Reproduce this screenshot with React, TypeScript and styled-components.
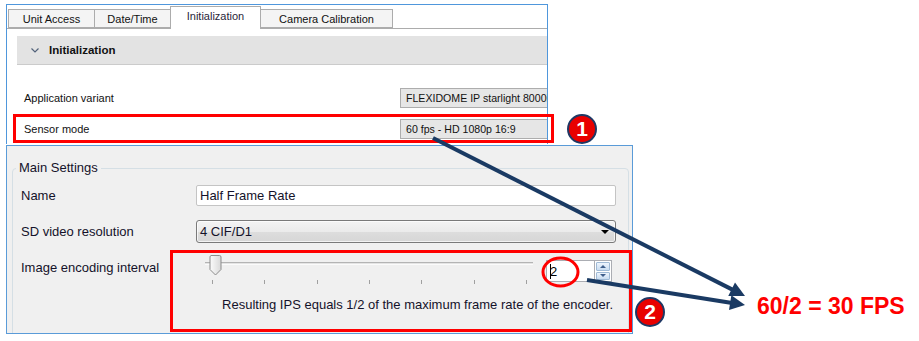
import React from 'react';
import styled, { createGlobalStyle } from 'styled-components';

const GlobalStyle = createGlobalStyle`
  html, body { margin: 0; padding: 0; background: #fff; }
  body { font-family: "Liberation Sans", Arial, sans-serif; color: #111; }
`;

const Canvas = styled.div`
  position: relative;
  width: 919px;
  height: 341px;
  overflow: hidden;
  box-sizing: border-box;
  padding: 4px 0 0 6px;
  display: flex;
  flex-direction: column;
  gap: 1px;
`;

/* ---------- top: configuration tree panel ---------- */

const ConfigPanel = styled.div`
  width: 542px;
  height: 140px;
  box-sizing: border-box;
  border: 1px solid #4f97dc;
  border-bottom: none;
  background: #fff;
  overflow: hidden;
  font-size: 11px;
`;

const TabStrip = styled.div`
  display: flex;
  align-items: flex-end;
  height: 23px;
  padding-left: 1px;
  border-bottom: 1px solid #acacac;
`;

const Tab = styled.div<{ $w: number; $active?: boolean }>`
  width: ${p => p.$w}px;
  height: ${p => (p.$active ? 23 : 19)}px;
  margin-bottom: ${p => (p.$active ? -1 : 0)}px;
  margin-left: -1px;
  box-sizing: border-box;
  border: 1px solid #acacac;
  border-bottom: ${p => (p.$active ? 'none' : '1px solid #acacac')};
  background: ${p => (p.$active ? '#fff' : '#f4f4f4')};
  display: flex;
  justify-content: center;
  padding-top: 3px;
  color: ${p => (p.$active ? '#2a1f3a' : '#111')};
  &:first-child { margin-left: 0; }
`;

const TabBody = styled.div`
  padding-left: 10px;
`;

const SectionHeader = styled.div`
  margin-top: 7px;
  height: 29px;
  box-sizing: border-box;
  background: #e3e3e3;
  border-bottom: 1px solid #cbcbcb;
  display: flex;
  align-items: center;
  gap: 10px;
  padding-left: 14px;
  font-weight: bold;
  font-size: 11.5px;
`;

const PropRow = styled.div<{ $mt?: number }>`
  margin-top: ${p => p.$mt ?? 0}px;
  height: 31px;
  display: flex;
  align-items: center;
  padding-left: 7px;
`;

const PropLabel = styled.div`
  width: 376px;
  flex-shrink: 0;
`;

const ReadOnlyBox = styled.div`
  flex-shrink: 0;
  width: 200px;
  height: 20px;
  box-sizing: border-box;
  border: 1px solid #adadad;
  background: #e6e6e6;
  padding: 0 5px;
  line-height: 18px;
  white-space: nowrap;
  font-size: 10.6px;
`;

/* ---------- bottom: main settings panel ---------- */

const SettingsPanel = styled.div`
  width: 627px;
  height: 189px;
  box-sizing: border-box;
  border: 1px solid #5a9bd8;
  background: #f0f0f0;
  overflow: hidden;
  padding: 14px 3px 0 5px;
  font-size: 13px;
  color: #14122a;
`;

const GroupBox = styled.fieldset`
  margin: 0;
  padding: 0 0 40px 0;
  border: 1px solid #d5dfe5;
  border-radius: 4px;
  min-width: 0;
`;

const Legend = styled.legend`
  margin-left: 3px;
  padding: 0 3px;
  line-height: 16px;
`;

const FieldRow = styled.div<{ $mt: number; $top?: boolean }>`
  margin-top: ${p => p.$mt}px;
  display: flex;
  align-items: ${p => (p.$top ? 'flex-start' : 'center')};
`;

const FieldLabel = styled.div<{ $offset?: number }>`
  width: 183px;
  box-sizing: border-box;
  padding-left: 8px;
  margin-top: ${p => p.$offset ?? 0}px;
  line-height: 16px;
  flex-shrink: 0;
`;

const TextInput = styled.div`
  width: 420px;
  height: 21px;
  box-sizing: border-box;
  background: #fff;
  border: 1px solid #c4c4c4;
  border-radius: 2px;
  padding-left: 3px;
  line-height: 19px;
`;

const Combo = styled.div`
  width: 420px;
  height: 23px;
  box-sizing: border-box;
  border: 1px solid #7a7a7a;
  border-radius: 3px;
  background: linear-gradient(#f4f4f4 0%, #ebebeb 50%, #dddddd 51%, #d6d6d6 100%);
  box-shadow: inset 0 0 0 1px rgba(255, 255, 255, 0.7);
  display: flex;
  align-items: center;
  justify-content: space-between;
  padding: 0 6px 0 3px;
`;

const ComboArrow = styled.span`
  width: 0;
  height: 0;
  border-left: 4px solid transparent;
  border-right: 4px solid transparent;
  border-top: 4px solid #000;
  margin-top: 1px;
`;

const IntervalBlock = styled.div`
  width: 420px;
  display: flex;
  flex-direction: column;
`;

const SliderLine = styled.div`
  display: flex;
  align-items: flex-start;
`;

const Slider = styled.div`
  position: relative;
  width: 337px;
  height: 30px;
  flex-shrink: 0;
`;

const Track = styled.div`
  margin: 7px 0 0 9px;
  width: 328px;
  height: 3px;
  box-sizing: border-box;
  border-top: 1px solid #b4b4b4;
  border-bottom: 1px solid #fbfbfb;
  background: #e4e4e4;
`;

const Thumb = styled.svg`
  position: absolute;
  left: 13px;
  top: 0;
`;

const Ticks = styled.div`
  margin: 15px 0 0 16px;
  width: 315px;
  display: flex;
  justify-content: space-between;
`;

const Tick = styled.span`
  width: 1px;
  height: 4px;
  background: #a0a0a0;
`;

const Spinner = styled.div`
  margin: 5px 0 0 13px;
  display: flex;
  height: 22px;
`;

const SpinText = styled.div`
  width: 48px;
  box-sizing: border-box;
  background: #fff;
  border: 1px solid #abadb3;
  border-right: none;
  padding-left: 3px;
  display: flex;
  align-items: center;
  color: #000;
`;

const Caret = styled.span`
  width: 1px;
  height: 15px;
  background: #000;
  margin-right: -1px;
`;

const SpinButtons = styled.div`
  width: 18px;
  display: flex;
  flex-direction: column;
  border: 1px solid #abadb3;
  box-sizing: border-box;
  background: #fff;
  padding: 1px;
  gap: 1px;
`;

const SpinButton = styled.div<{ $dir: 'up' | 'down' }>`
  flex: 1;
  border-radius: 1px;
  border: 1px solid #9fbad6;
  background: linear-gradient(#eef5fd, #c8dcf1);
  display: flex;
  align-items: center;
  justify-content: center;
  &::after {
    content: '';
    width: 0;
    height: 0;
    border-left: 3px solid transparent;
    border-right: 3px solid transparent;
    ${p => (p.$dir === 'up' ? 'border-bottom: 3px solid #3f5f8c;' : 'border-top: 3px solid #3f5f8c;')}
  }
`;

const ResultNote = styled.div`
  margin-top: 12px;
  line-height: 16px;
  text-align: right;
  padding-right: 3px;
  white-space: nowrap;
`;

/* ---------- annotations on top of the screenshot ---------- */

const Annotations = styled.svg`
  position: absolute;
  left: 0;
  top: 0;
  pointer-events: none;
`;

const Highlight = styled.div<{ $x: number; $y: number; $w: number; $h: number }>`
  position: absolute;
  left: ${p => p.$x}px;
  top: ${p => p.$y}px;
  width: ${p => p.$w}px;
  height: ${p => p.$h}px;
  box-sizing: border-box;
  border: 3px solid #ff0000;
`;

const Badge = styled.div<{ $x: number; $y: number }>`
  position: absolute;
  left: ${p => p.$x - 15}px;
  top: ${p => p.$y - 15}px;
  width: 30px;
  height: 30px;
  box-sizing: border-box;
  border-radius: 50%;
  border: 2px solid #1f3864;
  background: #e80000;
  color: #fff;
  font-weight: bold;
  font-size: 21px;
  display: flex;
  align-items: center;
  justify-content: center;
`;

const Result = styled.div`
  position: absolute;
  left: 757px;
  top: 295px;
  font-size: 23px;
  line-height: 23px;
  font-weight: bold;
  color: #ff0000;
  white-space: nowrap;
`;

type Pt = [number, number];

function Arrow({ from, to }: { from: Pt; to: Pt }) {
  const dx = to[0] - from[0];
  const dy = to[1] - from[1];
  const d = Math.hypot(dx, dy);
  const ux = dx / d;
  const uy = dy / d;
  const len = 15;
  const half = 7.5;
  const bx = to[0] - ux * len;
  const by = to[1] - uy * len;
  const head = `${to[0]},${to[1]} ${bx - uy * half},${by + ux * half} ${bx + uy * half},${by - ux * half}`;
  return (
    <g>
      <line x1={from[0]} y1={from[1]} x2={bx + ux * 2} y2={by + uy * 2} stroke="#1a3a63" strokeWidth={4} />
      <polygon points={head} fill="#1a3a63" />
    </g>
  );
}

export default function App() {
  const ticks = [0, 1, 2, 3, 4, 5, 6];

  return (
    <>
      <GlobalStyle />
      <Canvas>
        <ConfigPanel>
          <TabStrip>
            <Tab $w={87}>Unit Access</Tab>
            <Tab $w={77}>Date/Time</Tab>
            <Tab $w={91} $active>Initialization</Tab>
            <Tab $w={133}>Camera Calibration</Tab>
          </TabStrip>
          <TabBody>
            <SectionHeader>
              <svg width="8" height="5" viewBox="0 0 8 5">
                <path d="M0.5 0.5 L4 4 L7.5 0.5" fill="none" stroke="#52627a" strokeWidth="1.2" />
              </svg>
              Initialization
            </SectionHeader>
            <PropRow $mt={17}>
              <PropLabel>Application variant</PropLabel>
              <ReadOnlyBox>FLEXIDOME IP starlight 8000i</ReadOnlyBox>
            </PropRow>
            <PropRow>
              <PropLabel>Sensor mode</PropLabel>
              <ReadOnlyBox>60 fps - HD 1080p 16:9</ReadOnlyBox>
            </PropRow>
          </TabBody>
        </ConfigPanel>

        <SettingsPanel>
          <GroupBox>
            <Legend>Main Settings</Legend>
            <FieldRow $mt={9}>
              <FieldLabel>Name</FieldLabel>
              <TextInput>Half Frame Rate</TextInput>
            </FieldRow>
            <FieldRow $mt={14}>
              <FieldLabel>SD video resolution</FieldLabel>
              <Combo>
                4 CIF/D1
                <ComboArrow />
              </Combo>
            </FieldRow>
            <FieldRow $mt={12} $top>
              <FieldLabel $offset={5}>Image encoding interval</FieldLabel>
              <IntervalBlock>
                <SliderLine>
                  <Slider>
                    <Track />
                    <Thumb width="13" height="21" viewBox="0 0 13 21">
                      <defs>
                        <linearGradient id="thumbFill" x1="0" x2="1" y1="0" y2="0">
                          <stop offset="0" stopColor="#fbfbfb" />
                          <stop offset="1" stopColor="#d9d9d9" />
                        </linearGradient>
                      </defs>
                      <path
                        d="M2 0.5 H10.5 A1.5 1.5 0 0 1 12 2 V14.5 L6.5 20 L1 14.5 V2 A1.5 1.5 0 0 1 2 0.5 Z"
                        fill="url(#thumbFill)"
                        stroke="#8c8c8c"
                      />
                    </Thumb>
                    <Ticks>
                      {ticks.map(t => (
                        <Tick key={t} />
                      ))}
                    </Ticks>
                  </Slider>
                  <Spinner>
                    <SpinText>
                      <Caret />2
                    </SpinText>
                    <SpinButtons>
                      <SpinButton $dir="up" />
                      <SpinButton $dir="down" />
                    </SpinButtons>
                  </Spinner>
                </SliderLine>
                <ResultNote>Resulting IPS equals 1/2 of the maximum frame rate of the encoder.</ResultNote>
              </IntervalBlock>
            </FieldRow>
          </GroupBox>
        </SettingsPanel>

        <Highlight $x={13} $y={114} $w={541} $h={29} />
        <Highlight $x={170} $y={250} $w={462} $h={82} />

        <Annotations width="919" height="341" viewBox="0 0 919 341">
          <ellipse cx={560.5} cy={272} rx={17.5} ry={14} fill="none" stroke="#ff0000" strokeWidth={3} />
          <Arrow from={[433, 138]} to={[745, 296]} />
          <Arrow from={[587, 280]} to={[745, 305]} />
        </Annotations>

        <Badge $x={582} $y={129}>1</Badge>
        <Badge $x={650} $y={312}>2</Badge>

        <Result>60/2 = 30 FPS</Result>
      </Canvas>
    </>
  );
}
